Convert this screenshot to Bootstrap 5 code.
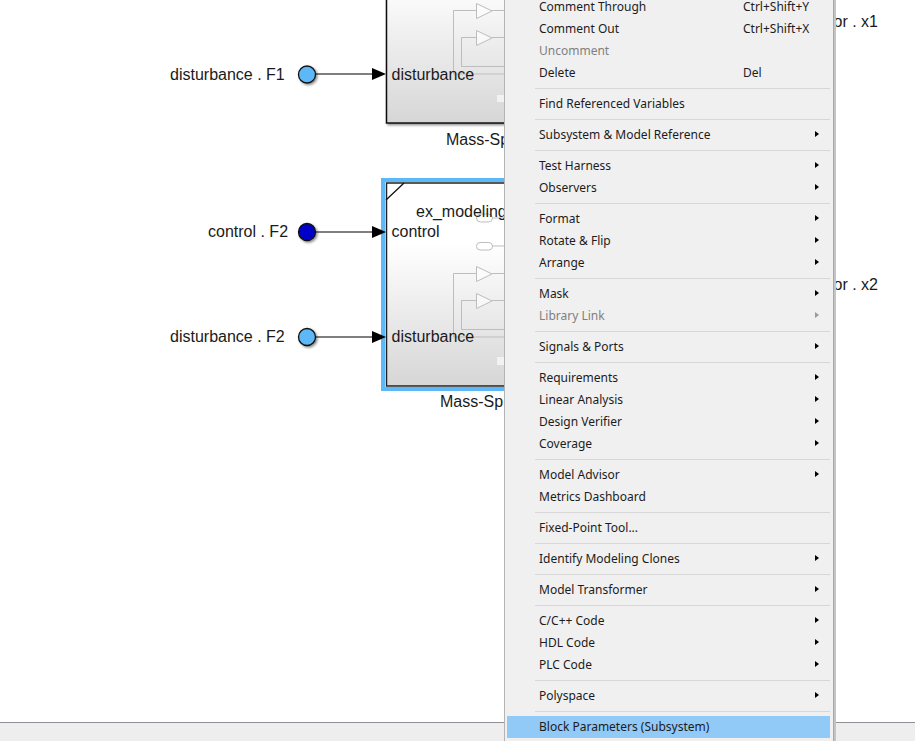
<!DOCTYPE html>
<html lang="en">
<head>
<meta charset="utf-8">
<title>Block context menu</title>
<link href="https://cdn.jsdelivr.net/npm/bootstrap@5.3.0/dist/css/bootstrap.min.css" rel="stylesheet">
<style>
html,body{height:100%;overflow:hidden;background:#fff}
.sl-page{height:741px;overflow:hidden}
.sl-canvas{height:722px;overflow:hidden}
.sl-canvas svg{display:block}
.sl-label{font-family:"Liberation Sans",Arial,sans-serif;font-size:16px;fill:#1a1a1a}
.sl-status{height:19px;background:#eeeeee;border-top:1px solid #8d9195}
.sl-menu.dropdown-menu{position:absolute;display:block;left:504px;top:-4px;width:330px;min-width:0;margin:0;padding:0 3px 0 2px;background:#f0f0f0;border:0;border-left:1px solid #b4b4b4;border-right:1px solid #a8a8a8;border-radius:0;box-shadow:2px 0 0 #c4c4c4;height:760px;z-index:10;font-family:"Noto Sans",sans-serif;font-size:12px}
.sl-menu .dropdown-item{display:flex;align-items:center;height:22px;padding:0 0 0 32px;color:#1c1c1c;font-size:12px;line-height:22px;position:relative;background:transparent}
.sl-menu .dropdown-item.disabled{color:#7f7f7f}
.sl-menu .dropdown-item.active{background:#91c9f7;color:#1c1c1c}
.sl-menu .dropdown-divider{margin:4px 0 4px 28px;border-top:1px solid #d7d7d7;opacity:1}
.sl-name{display:inline-block;width:204px;flex:none}
.sl-sub::after{content:"";position:absolute;left:308px;top:7px;border-left:4px solid #000;border-top:3.5px solid transparent;border-bottom:3.5px solid transparent}
.sl-sub.disabled::after{border-left-color:#9a9a9a}
</style>
</head>
<body>
<div class="sl-page position-relative d-flex flex-column">
  <div class="sl-canvas flex-shrink-0">
    <svg width="915" height="722" viewBox="0 0 915 722" xmlns="http://www.w3.org/2000/svg">
      <defs>
        <linearGradient id="blk" x1="0" y1="0" x2="0" y2="1">
          <stop offset="0" stop-color="#ffffff"/>
          <stop offset=".3" stop-color="#ffffff"/>
          <stop offset="1" stop-color="#d6d6d6"/>
        </linearGradient>
        <filter id="soft" x="-40%" y="-40%" width="200%" height="200%"><feDropShadow dx="1.5" dy="1.5" stdDeviation="1" flood-color="#000" flood-opacity=".45"/></filter>
        <g id="inner" fill="none" stroke="#bdbdbd" stroke-width="1">
          <path d="M476 273.5H453.5V337H520"/>
          <path d="M476 300.5H461.5V329.5H520"/>
          <path d="M476.5 266.5L492 274L476.5 281.5Z" fill="#fff" fill-opacity=".6"/>
          <path d="M476.5 293.5L492 301L476.5 308.5Z" fill="#fff" fill-opacity=".6"/>
          <path d="M492 273.5H520M492 300.5H520"/>
        </g>
      </defs>

      <!-- first subsystem -->
      <rect x="386.5" y="-80" width="140" height="203" fill="url(#blk)" stroke="#111" stroke-width="1.5" filter="url(#soft)"/>
      <use href="#inner" y="-263"/>
      <rect x="497" y="95" width="7" height="7" fill="#f2f2f2"/>

      <!-- second subsystem: selected -->
      <rect x="383" y="180" width="140" height="209" fill="none" stroke="#5cb8f7" stroke-width="4"/>
      <rect x="386.5" y="183" width="140" height="203" fill="url(#blk)" stroke="#222" stroke-width="1.5"/>
      <path d="M386 200L404 183" stroke="#111" stroke-width="1.3"/>
      <use href="#inner"/>
      <rect x="476.5" y="214" width="16" height="8" rx="4" fill="#fff" stroke="#bdbdbd"/>
      <path d="M492 218H520" stroke="#bdbdbd"/>
      <rect x="476.5" y="242.5" width="16" height="7.5" rx="3.7" fill="#fff" stroke="#bdbdbd"/>
      <path d="M492 246H520" stroke="#bdbdbd"/>
      <rect x="497" y="357" width="7" height="8" fill="#f2f2f2"/>

      <!-- signals -->
      <g stroke="#000" stroke-width="1.2">
        <path d="M316 74H372M316 232H372M316 337H372"/>
      </g>
      <g fill="#000">
        <path d="M372 68L386 74L372 80Z"/>
        <path d="M372 226L386 232L372 238Z"/>
        <path d="M372 331L386 337L372 343Z"/>
      </g>
      <g stroke="#111" stroke-width="1.3" filter="url(#soft)">
        <circle cx="307" cy="74.5" r="8.5" fill="#5cb8f7"/>
        <circle cx="307" cy="232" r="8.5" fill="#0000c8"/>
        <circle cx="307" cy="337" r="8.5" fill="#5cb8f7"/>
      </g>

      <!-- labels -->
      <text class="sl-label" x="170" y="79.5">disturbance . F1</text>
      <text class="sl-label" x="208" y="237">control . F2</text>
      <text class="sl-label" x="170" y="342">disturbance . F2</text>
      <text class="sl-label" x="391.5" y="80">disturbance</text>
      <text class="sl-label" x="391.5" y="237">control</text>
      <text class="sl-label" x="391.5" y="342">disturbance</text>
      <text class="sl-label" x="416" y="217">ex_modeling</text>
      <text class="sl-label" x="446" y="145">Mass-Sp</text>
      <text class="sl-label" x="440" y="407">Mass-Sp</text>
      <text class="sl-label" x="878" y="27" text-anchor="end">or . x1</text>
      <text class="sl-label" x="878" y="290" text-anchor="end">or . x2</text>
    </svg>
  </div>
  <div class="sl-status flex-grow-1"></div>

  <ul class="dropdown-menu sl-menu list-unstyled mb-0">
    <li><a class="dropdown-item" href="#"><span class="sl-name">Comment Through</span><span>Ctrl+Shift+Y</span></a></li>
    <li><a class="dropdown-item" href="#"><span class="sl-name">Comment Out</span><span>Ctrl+Shift+X</span></a></li>
    <li><a class="dropdown-item disabled" href="#"><span class="sl-name">Uncomment</span></a></li>
    <li><a class="dropdown-item" href="#"><span class="sl-name">Delete</span><span>Del</span></a></li>
    <li><hr class="dropdown-divider"></li>
    <li><a class="dropdown-item" href="#">Find Referenced Variables</a></li>
    <li><hr class="dropdown-divider"></li>
    <li><a class="dropdown-item sl-sub" href="#">Subsystem &amp; Model Reference</a></li>
    <li><hr class="dropdown-divider"></li>
    <li><a class="dropdown-item sl-sub" href="#">Test Harness</a></li>
    <li><a class="dropdown-item sl-sub" href="#">Observers</a></li>
    <li><hr class="dropdown-divider"></li>
    <li><a class="dropdown-item sl-sub" href="#">Format</a></li>
    <li><a class="dropdown-item sl-sub" href="#">Rotate &amp; Flip</a></li>
    <li><a class="dropdown-item sl-sub" href="#">Arrange</a></li>
    <li><hr class="dropdown-divider"></li>
    <li><a class="dropdown-item sl-sub" href="#">Mask</a></li>
    <li><a class="dropdown-item sl-sub disabled" href="#">Library Link</a></li>
    <li><hr class="dropdown-divider"></li>
    <li><a class="dropdown-item sl-sub" href="#">Signals &amp; Ports</a></li>
    <li><hr class="dropdown-divider"></li>
    <li><a class="dropdown-item sl-sub" href="#">Requirements</a></li>
    <li><a class="dropdown-item sl-sub" href="#">Linear Analysis</a></li>
    <li><a class="dropdown-item sl-sub" href="#">Design Verifier</a></li>
    <li><a class="dropdown-item sl-sub" href="#">Coverage</a></li>
    <li><hr class="dropdown-divider"></li>
    <li><a class="dropdown-item sl-sub" href="#">Model Advisor</a></li>
    <li><a class="dropdown-item" href="#">Metrics Dashboard</a></li>
    <li><hr class="dropdown-divider"></li>
    <li><a class="dropdown-item" href="#">Fixed-Point Tool...</a></li>
    <li><hr class="dropdown-divider"></li>
    <li><a class="dropdown-item sl-sub" href="#">Identify Modeling Clones</a></li>
    <li><hr class="dropdown-divider"></li>
    <li><a class="dropdown-item sl-sub" href="#">Model Transformer</a></li>
    <li><hr class="dropdown-divider"></li>
    <li><a class="dropdown-item sl-sub" href="#">C/C++ Code</a></li>
    <li><a class="dropdown-item sl-sub" href="#">HDL Code</a></li>
    <li><a class="dropdown-item sl-sub" href="#">PLC Code</a></li>
    <li><hr class="dropdown-divider"></li>
    <li><a class="dropdown-item sl-sub" href="#">Polyspace</a></li>
    <li><hr class="dropdown-divider"></li>
    <li><a class="dropdown-item active" href="#">Block Parameters (Subsystem)</a></li>
  </ul>
</div>
<script src="https://cdn.jsdelivr.net/npm/bootstrap@5.3.0/dist/js/bootstrap.bundle.min.js"></script>
</body>
</html>
